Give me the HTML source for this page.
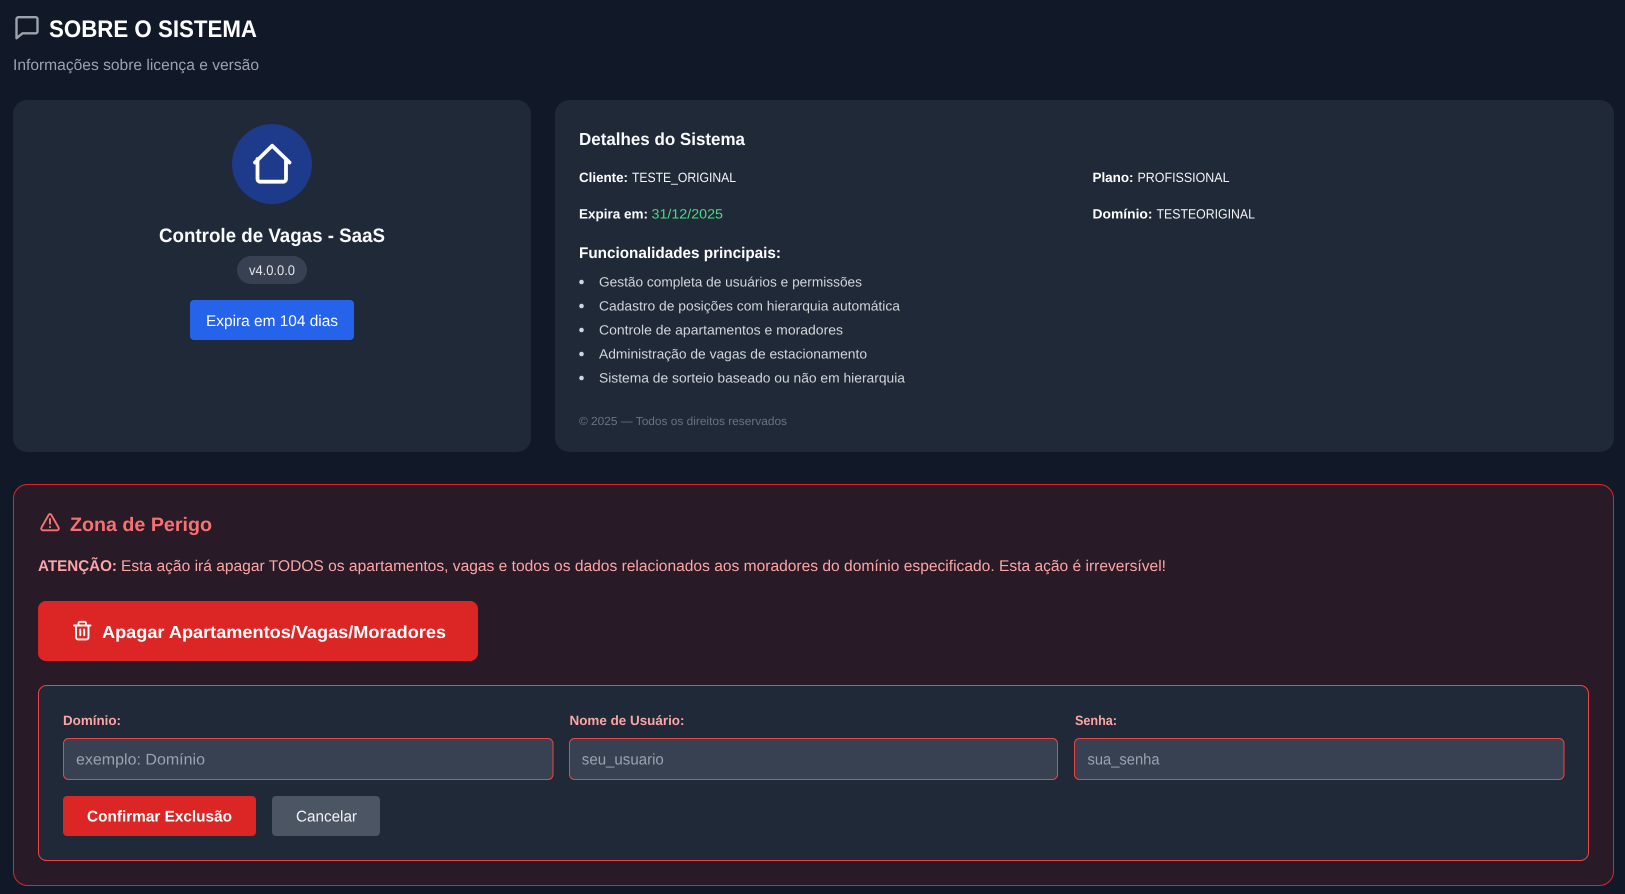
<!DOCTYPE html>
<html lang="pt-BR">
<head>
<meta charset="utf-8">
<title>Sobre o Sistema</title>
<style>
html,body{margin:0;padding:0;background:#111827;width:1625px;height:894px;overflow:hidden}
svg{display:block}
text{font-family:"Liberation Sans",Arial,sans-serif;white-space:pre;text-rendering:geometricPrecision}
.b{font-weight:700}
</style>
</head>
<body>
<svg xmlns="http://www.w3.org/2000/svg" width="1625" height="894" viewBox="0 0 1625 894">
<rect width="1625" height="894" fill="#111827"/>

<!-- Header -->
<path d="M18.500 17.200H35.800A1.700 1.700 0 0 1 37.500 18.900V31.600A1.700 1.700 0 0 1 35.800 33.300H22.500L16.500 38.200V19.200A2 2 0 0 1 18.500 17.200Z" fill="none" stroke="#9ca3af" stroke-width="2.400" stroke-linejoin="round"/>
<text class="b" x="49" y="37" font-size="24" fill="#fff" textLength="208" lengthAdjust="spacingAndGlyphs">SOBRE O SISTEMA</text>
<text x="13" y="70" font-size="15.500" fill="#9ca3af" textLength="246" lengthAdjust="spacingAndGlyphs">Informações sobre licença e versão</text>

<!-- Left card -->
<rect x="13" y="100" width="518" height="352" rx="14" fill="#1f2937"/>
<circle cx="272" cy="164" r="40" fill="#1e3a8a"/>
<path d="M255 162.500L272.200 145.700L289.500 162.500M257.500 159V179A2.700 2.700 0 0 0 260.200 181.700H283.300A2.700 2.700 0 0 0 286 179V159" fill="none" stroke="#fff" stroke-width="3.800" stroke-linecap="round" stroke-linejoin="round"/>
<text class="b" x="159" y="242" font-size="19.500" fill="#f9fafb" textLength="226" lengthAdjust="spacingAndGlyphs">Controle de Vagas - SaaS</text>
<rect x="237" y="256" width="70" height="28" rx="14" fill="#374151"/>
<text x="249" y="275" font-size="14" fill="#e5e7eb" textLength="46" lengthAdjust="spacingAndGlyphs">v4.0.0.0</text>
<rect x="190" y="300" width="164" height="40" rx="4" fill="#2563eb"/>
<text x="206" y="326" font-size="15.500" fill="#fff" textLength="132" lengthAdjust="spacingAndGlyphs">Expira em 104 dias</text>

<!-- Right card -->
<rect x="555" y="100" width="1059" height="352" rx="14" fill="#1f2937"/>
<text class="b" x="579" y="145" font-size="17.500" fill="#f9fafb" textLength="166" lengthAdjust="spacingAndGlyphs">Detalhes do Sistema</text>

<text class="b" x="579" y="182" font-size="13.500" fill="#fff" textLength="49" lengthAdjust="spacingAndGlyphs">Cliente:</text>
<text x="632" y="182" font-size="13.500" fill="#f3f4f6" textLength="104" lengthAdjust="spacingAndGlyphs">TESTE_ORIGINAL</text>
<text class="b" x="1092.500" y="182" font-size="13.500" fill="#fff" textLength="41" lengthAdjust="spacingAndGlyphs">Plano:</text>
<text x="1137.500" y="182" font-size="13.500" fill="#f3f4f6" textLength="92" lengthAdjust="spacingAndGlyphs">PROFISSIONAL</text>

<text class="b" x="579" y="218.500" font-size="13.500" fill="#fff" textLength="69" lengthAdjust="spacingAndGlyphs">Expira em:</text>
<text x="651.500" y="218.500" font-size="13.500" fill="#4ade80" textLength="71.500" lengthAdjust="spacingAndGlyphs">31/12/2025</text>
<text class="b" x="1092.500" y="218.500" font-size="13.500" fill="#fff" textLength="60" lengthAdjust="spacingAndGlyphs">Domínio:</text>
<text x="1156.500" y="218.500" font-size="13.500" fill="#f3f4f6" textLength="98.500" lengthAdjust="spacingAndGlyphs">TESTEORIGINAL</text>

<text class="b" x="579" y="258" font-size="15.500" fill="#fff" textLength="202" lengthAdjust="spacingAndGlyphs">Funcionalidades principais:</text>

<g fill="#d1d5db">
<circle cx="581.500" cy="282" r="2.300"/>
<circle cx="581.500" cy="306" r="2.300"/>
<circle cx="581.500" cy="330" r="2.300"/>
<circle cx="581.500" cy="354" r="2.300"/>
<circle cx="581.500" cy="378" r="2.300"/>
<text x="599" y="286.500" font-size="13.500" textLength="263" lengthAdjust="spacingAndGlyphs">Gestão completa de usuários e permissões</text>
<text x="599" y="310.500" font-size="13.500" textLength="301" lengthAdjust="spacingAndGlyphs">Cadastro de posições com hierarquia automática</text>
<text x="599" y="334.500" font-size="13.500" textLength="244" lengthAdjust="spacingAndGlyphs">Controle de apartamentos e moradores</text>
<text x="599" y="358.500" font-size="13.500" textLength="268" lengthAdjust="spacingAndGlyphs">Administração de vagas de estacionamento</text>
<text x="599" y="382.500" font-size="13.500" textLength="306" lengthAdjust="spacingAndGlyphs">Sistema de sorteio baseado ou não em hierarquia</text>
</g>
<text x="579" y="425" font-size="11.700" fill="#6b7280" textLength="208" lengthAdjust="spacingAndGlyphs">© 2025 — Todos os direitos reservados</text>

<!-- Danger zone -->
<rect x="13.500" y="484.500" width="1600" height="401" rx="14" fill="#291a28" stroke="#dc2626" stroke-width="1"/>
<path d="M48.700 514.800L41.500 527.500A1.800 1.800 0 0 0 43.100 530.300H56.900A1.800 1.800 0 0 0 58.500 527.500L51.300 514.800A1.500 1.500 0 0 0 48.700 514.800Z" fill="none" stroke="#f87171" stroke-width="1.900" stroke-linejoin="round"/>
<path d="M50 519V523.800M50 527V527.100" fill="none" stroke="#f87171" stroke-width="2" stroke-linecap="round"/>
<text class="b" x="70" y="531" font-size="19.500" fill="#f87171" textLength="142" lengthAdjust="spacingAndGlyphs">Zona de Perigo</text>
<text class="b" x="38" y="571" font-size="15.500" fill="#fca5a5" textLength="79" lengthAdjust="spacingAndGlyphs">ATENÇÃO:</text>
<text x="121" y="571" font-size="15.500" fill="#fca5a5" textLength="1045" lengthAdjust="spacingAndGlyphs">Esta ação irá apagar TODOS os apartamentos, vagas e todos os dados relacionados aos moradores do domínio especificado. Esta ação é irreversível!</text>

<rect x="38" y="601" width="440" height="60" rx="8" fill="#dc2626"/>
<path d="M74 625.500H90.500M78.500 625.500V623.200A1.400 1.400 0 0 1 79.900 621.800H84.600A1.400 1.400 0 0 1 86 623.200V625.500M76 625.500V637.400A2 2 0 0 0 78 639.400H86.500A2 2 0 0 0 88.500 637.400V625.500M80.300 629.500V635.300M84.200 629.500V635.300" fill="none" stroke="#fff" stroke-width="1.900" stroke-linecap="round" stroke-linejoin="round"/>
<text class="b" x="102" y="638" font-size="17.500" fill="#fff" textLength="344" lengthAdjust="spacingAndGlyphs">Apagar Apartamentos/Vagas/Moradores</text>

<rect x="38.500" y="685.500" width="1550" height="175" rx="8" fill="#1f2937" stroke="#ef4444" stroke-width="1"/>

<text class="b" x="63" y="725" font-size="13.500" fill="#fca5a5" textLength="58" lengthAdjust="spacingAndGlyphs">Domínio:</text>
<text class="b" x="569.500" y="725" font-size="13.500" fill="#fca5a5" textLength="115" lengthAdjust="spacingAndGlyphs">Nome de Usuário:</text>
<text class="b" x="1075" y="725" font-size="13.500" fill="#fca5a5" textLength="42" lengthAdjust="spacingAndGlyphs">Senha:</text>

<rect x="63.500" y="738.500" width="489.500" height="41" rx="5" fill="#374151" stroke="#ef4444" stroke-width="1"/>
<rect x="569.500" y="738.500" width="488" height="41" rx="5" fill="#374151" stroke="#ef4444" stroke-width="1"/>
<rect x="1074.500" y="738.500" width="489.500" height="41" rx="5" fill="#374151" stroke="#ef4444" stroke-width="1"/>
<text x="76" y="764.500" font-size="15.500" fill="#9ca3af" textLength="129" lengthAdjust="spacingAndGlyphs">exemplo: Domínio</text>
<text x="581.800" y="764.500" font-size="15.500" fill="#9ca3af" textLength="82" lengthAdjust="spacingAndGlyphs">seu_usuario</text>
<text x="1087.500" y="764.500" font-size="15.500" fill="#9ca3af" textLength="72" lengthAdjust="spacingAndGlyphs">sua_senha</text>

<rect x="63" y="796" width="193" height="40" rx="4" fill="#dc2626"/>
<text class="b" x="87" y="821.500" font-size="15.500" fill="#fff" textLength="145" lengthAdjust="spacingAndGlyphs">Confirmar Exclusão</text>
<rect x="272" y="796" width="108" height="40" rx="4" fill="#4b5563"/>
<text x="296" y="821.500" font-size="15.500" fill="#f3f4f6" textLength="61" lengthAdjust="spacingAndGlyphs">Cancelar</text>
</svg>
</body>
</html>
